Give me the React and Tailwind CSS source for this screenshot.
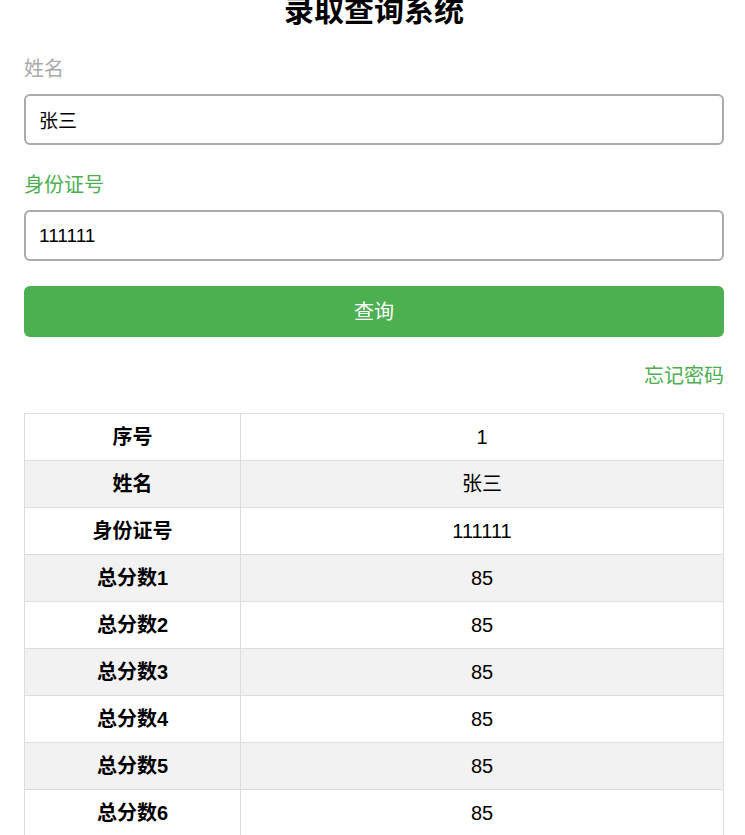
const rows = [
  ['序号', '1'],
  ['姓名', '张三'],
  ['身份证号', '111111'],
  ['总分数1', '85'],
  ['总分数2', '85'],
  ['总分数3', '85'],
  ['总分数4', '85'],
  ['总分数5', '85'],
  ['总分数6', '85'],
]

const App = () => {
  return (
    <div className="min-h-screen bg-white font-['Liberation_Sans','Noto_Sans_CJK_SC',sans-serif] text-black">
      <div className="ml-[24px] w-[700px]">
        <h1 className="-mt-[6px] text-center text-[30px] font-bold leading-[34px]">录取查询系统</h1>

        <label className="mt-[30px] block text-[20px] leading-[22px] text-[#aaaaaa]">姓名</label>
        <input
          className="mt-[14px] block h-[51px] w-full rounded-[6px] border-2 border-[#aaaaaa] px-[13px] text-[19px] outline-none"
          defaultValue="张三"
        />

        <label className="mt-[29px] block text-[20px] leading-[22px] text-[#4caf50]">身份证号</label>
        <input
          className="mt-[14px] block h-[51px] w-full rounded-[6px] border-2 border-[#aaaaaa] px-[13px] text-[19px] outline-none"
          defaultValue="111111"
        />

        <button className="mt-[25px] block h-[51px] w-full rounded-[6px] bg-[#4caf50] text-[20px] text-white">
          查询
        </button>

        <div className="mt-[28px] text-right text-[20px] leading-[22px] text-[#4caf50]">忘记密码</div>

        <table className="mt-[26px] w-full border-collapse text-[20px]">
          <tbody>
            {rows.map(([k, v], i) => (
              <tr key={k} className={i % 2 === 1 ? 'bg-[#f2f2f2]' : 'bg-white'}>
                <th className="h-[47px] w-[216px] border border-[#dddddd] text-center font-bold">{k}</th>
                <td className="h-[47px] border border-[#dddddd] text-center">{v}</td>
              </tr>
            ))}
          </tbody>
        </table>
      </div>
    </div>
  )
}

export default App
